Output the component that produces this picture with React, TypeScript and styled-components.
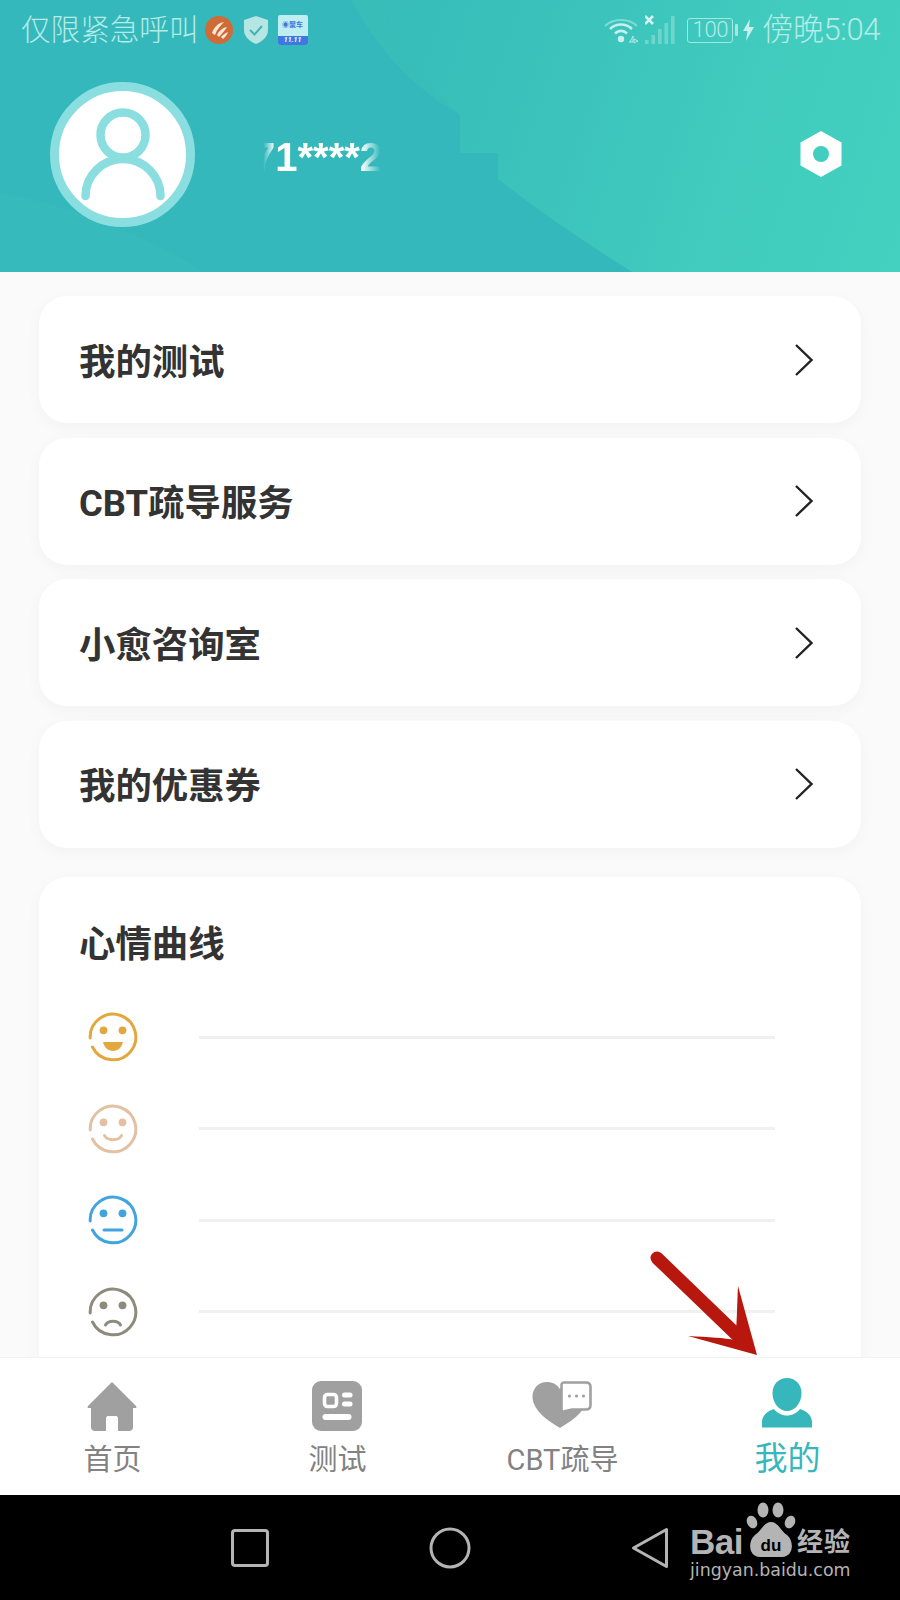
import * as React from 'react';
import styled, { createGlobalStyle } from 'styled-components';

const GlobalStyle = createGlobalStyle`
  html, body {
    margin: 0;
    padding: 0;
    background: #fafafa;
  }
  * {
    box-sizing: border-box;
  }
`;

const Page = styled.div`
  position: relative;
  display: flex;
  flex-direction: column;
  width: 900px;
  height: 1600px;
  overflow: hidden;
  background: #fafafa;
  font-family: Roboto, 'Noto Sans CJK SC', sans-serif;
`;

const Header = styled.header`
  position: relative;
  flex: 0 0 272px;
  background: linear-gradient(108deg, #37bcba 35%, #3ac1bb 55%, #40cbbe 78%, #44d1bf 100%);
`;

const HeaderArt = styled.svg`
  position: absolute;
  inset: 0;
`;

const StatusBar = styled.div`
  position: relative;
  display: flex;
  justify-content: space-between;
  align-items: center;
  height: 60px;
  padding: 0 20px 0 21px;
  color: #b5ebe6;
`;

const StatusGroup = styled.div`
  display: flex;
  align-items: center;
`;

const StatusText = styled.span`
  font-size: 29.6px;
  line-height: 36px;
  font-weight: 300;
  white-space: nowrap;
`;

const ClockText = styled(StatusText)`
  margin-left: 8px;
  font-size: 31px;
  letter-spacing: -0.4px;
`;

const StatusIcon = styled.svg<{ $gap?: number }>`
  display: block;
  flex: none;
  margin-left: ${p => p.$gap ?? 8}px;
`;

const AppBadge = styled.div`
  display: flex;
  flex-direction: column;
  width: 30px;
  height: 30px;
  margin-left: 10px;
  overflow: hidden;
  border-radius: 2px;
  background: #bfeef0;
`;

const AppBadgeTop = styled.span`
  flex: 1;
  font-size: 7px;
  line-height: 20px;
  font-weight: 700;
  text-align: center;
  color: #3f78d8;
`;

const AppBadgeBand = styled.span`
  height: 9px;
  font-size: 7px;
  line-height: 9px;
  font-weight: 700;
  font-style: italic;
  text-align: center;
  color: #ffffff;
  background: #3f78e0;
`;

const BatteryBox = styled.div`
  width: 46px;
  height: 25px;
  margin-left: 12px;
  border: 1.5px solid #a5e6e0;
  border-radius: 3px;
  font-size: 22px;
  line-height: 22px;
  font-weight: 300;
  text-align: center;
  letter-spacing: -0.4px;
`;

const BatteryTip = styled.div`
  width: 3px;
  height: 12px;
  margin-left: 2px;
  border-radius: 1px;
  background: #a5e6e0;
`;

const Profile = styled.div`
  position: relative;
  display: flex;
  align-items: center;
  height: 186px;
  padding: 0 58px 0 50px;
  margin-top: 1px;
`;

const Avatar = styled.div`
  display: flex;
  align-items: center;
  justify-content: center;
  width: 145px;
  height: 145px;
  border: 9px solid #8bdee0;
  border-radius: 50%;
  background: #ffffff;
`;

const UserName = styled.div`
  flex: 1;
  margin-left: 58px;
  padding-top: 5px;
  font-family: 'Liberation Sans', sans-serif;
  font-size: 40px;
  font-weight: 700;
  line-height: 44px;
  color: #ffffff;
`;

const UserNameMask = styled.span`
  display: inline-block;
  -webkit-mask-image: linear-gradient(90deg, transparent 8%, #000 17%, #000 84%, transparent 99%);
  mask-image: linear-gradient(90deg, transparent 8%, #000 17%, #000 84%, transparent 99%);
`;

const Content = styled.main`
  flex: 1;
  min-height: 0;
  overflow: hidden;
  padding: 24px 39px 0;
`;

const Card = styled.div`
  border-radius: 28px;
  background: #ffffff;
  box-shadow: 0 4px 16px rgba(0, 0, 0, 0.035);
`;

const MenuCard = styled(Card)`
  display: flex;
  align-items: center;
  justify-content: space-between;
  height: 127px;
  margin-bottom: 14.5px;
  padding: 0 47px 0 40px;
`;

const MenuTitle = styled.span`
  padding-top: 6px;
  font-size: 36.4px;
  font-weight: 700;
  line-height: 44px;
  color: #333333;
`;

const MoodCard = styled(Card)`
  margin-top: 29px;
  padding: 46px 0 40px;
`;

const MoodTitle = styled.h2`
  margin: 0 0 25px 40px;
  font-size: 36.4px;
  font-weight: 700;
  line-height: 44px;
  color: #333333;
`;

const MoodRow = styled.div`
  display: flex;
  align-items: center;
  gap: 61px;
  height: 91.5px;
  padding: 0 86px 0 49px;
`;

const MoodLine = styled.div`
  flex: 1;
  height: 3px;
  background: #f0f0f0;
`;

const TabBar = styled.nav`
  display: grid;
  flex: 0 0 138px;
  grid-template-columns: repeat(4, 1fr);
  border-top: 1px solid #f2f2f2;
  background: #ffffff;
`;

const TabItem = styled.div<{ $active?: boolean }>`
  display: flex;
  flex-direction: column;
  align-items: center;
  padding-top: ${p => (p.$active ? 20 : 23)}px;
  color: ${p => (p.$active ? '#37b7bb' : '#828282')};
`;

const TabIcon = styled.svg`
  display: block;
  flex: none;
  margin-right: 1px;
`;

const TabLabel = styled.span<{ $active?: boolean }>`
  margin-top: ${p => (p.$active ? 11 : 9)}px;
  font-size: ${p => (p.$active ? 33 : 29)}px;
  line-height: 40px;
  white-space: nowrap;
`;

const SoftBar = styled.div`
  position: relative;
  display: flex;
  flex: 0 0 105px;
  align-items: center;
  justify-content: center;
  gap: 160px;
  background: #000000;
`;

const SoftKey = styled.svg`
  display: block;
`;

const Watermark = styled.div`
  position: absolute;
  top: 0;
  left: 690px;
  width: 175px;
  color: #b4b4b4;
`;

const WatermarkTop = styled.div`
  display: flex;
  align-items: flex-end;
  height: 70px;
`;

const WatermarkBai = styled.span`
  font-family: 'Liberation Sans', sans-serif;
  font-size: 35px;
  font-weight: 700;
  line-height: 46px;
  letter-spacing: -0.5px;
`;

const WatermarkJing = styled.span`
  margin-left: 1px;
  font-size: 26px;
  font-weight: 700;
  line-height: 46px;
  letter-spacing: 1px;
`;

const WatermarkUrl = styled.div`
  margin-top: -7px;
  font-family: 'DejaVu Sans', sans-serif;
  font-size: 17.4px;
  line-height: 24px;
  white-space: nowrap;
`;

const ArrowOverlay = styled.svg`
  position: absolute;
  top: 1250px;
  left: 650px;
`;

const Face: React.FC<{ color: string; mouth: React.ReactNode }> = ({ color, mouth }) => (
  <svg width={50} height={50} viewBox="0 0 50 50" fill="none" style={{ flex: 'none' }}>
    <path d="M4.5 35 A22.8 22.8 0 1 0 2.2 26" stroke={color} strokeWidth={3} strokeLinecap="round" />
    <circle cx={15.5} cy={18.3} r={3.9} fill={color} />
    <circle cx={34.5} cy={18.3} r={3.9} fill={color} />
    {mouth}
  </svg>
);

const moods = [
  {
    color: '#e2a73e',
    mouth: <path d="M15 30 H35 C34 35 30 39 25 39 C20 39 16 35 15 30 Z" fill="#e2a73e" />,
  },
  {
    color: '#e3c0a2',
    mouth: <path d="M16.5 31.5 C19 37 31 37 33.5 31.5" stroke="#e3c0a2" strokeWidth={3} strokeLinecap="round" />,
  },
  {
    color: '#41a3e0',
    mouth: <path d="M16 35 H34" stroke="#41a3e0" strokeWidth={3} strokeLinecap="round" />,
  },
  {
    color: '#8f8b7c',
    mouth: <path d="M17.5 38 C20 33 30 33 32.5 38" stroke="#8f8b7c" strokeWidth={3} strokeLinecap="round" />,
  },
];

const menuItems = ['我的测试', 'CBT疏导服务', '小愈咨询室', '我的优惠券'];

const Chevron = () => (
  <svg width={20} height={34} viewBox="0 0 20 34" fill="none">
    <path d="M2 2 L17.5 17 L2 32" stroke="#222222" strokeWidth={2.4} />
  </svg>
);

const App: React.FC = () => {
  return (
    <Page>
      <GlobalStyle />
      <Header>
        <HeaderArt width={900} height={272} viewBox="0 0 900 272">
          <path
            d="M0 0 H378 C400 48 428 88 460 115 V153 H498 V179 C545 216 590 246 632 272 H0 Z"
            fill="#38bdb9"
          />
          <path
            d="M0 0 H352 C372 40 404 82 460 115 V153 H498 V179 C545 216 590 246 632 272 H0 Z"
            fill="#35b8bb"
          />
          <path d="M0 193 C70 205 140 232 205 272 H0 Z" fill="#36babb" />
        </HeaderArt>
        <StatusBar>
          <StatusGroup>
            <StatusText>仅限紧急呼叫</StatusText>
            <StatusIcon $gap={6} width={28} height={28} viewBox="0 0 28 28">
              <circle cx={14} cy={14} r={14} fill="#cf6b35" />
              <path d="M7 17 C9 11 13 7 19 6 C16 9 12 13 10 19 Z" fill="#f8e6d8" />
              <path d="M12 19 C14 15 17 12 22 11 C20 14 17 18 14 21 Z" fill="#f8e6d8" />
              <path d="M16 21 C18 19 20 17 23 16 C22 19 20 21 18 23 Z" fill="#f8e6d8" />
            </StatusIcon>
            <StatusIcon $gap={11} width={24} height={28} viewBox="0 0 24 28">
              <path d="M12 0 L24 4 V14 C24 21 18 25.5 12 28 C6 25.5 0 21 0 14 V4 Z" fill="#b5e6e4" />
              <path d="M6 14 L10.5 18.5 L18 10" fill="none" stroke="#48b3b3" strokeWidth={2} />
            </StatusIcon>
            <AppBadge>
              <AppBadgeTop>◉聚车</AppBadgeTop>
              <AppBadgeBand>11.11</AppBadgeBand>
            </AppBadge>
          </StatusGroup>
          <StatusGroup>
            <StatusIcon $gap={0} width={36} height={30} viewBox="0 0 36 30" fill="none">
              <path d="M1 11 C9 3 25 3 33 11" stroke="#7fdcd3" strokeWidth={2} />
              <path d="M6 14 C12 8 22 8 28 14" stroke="#c9f0ec" strokeWidth={2.6} />
              <path d="M11 18.5 C14.5 15 19.5 15 23 18.5" stroke="#c9f0ec" strokeWidth={2.6} />
              <circle cx={17} cy={24} r={3.2} fill="#c9f0ec" />
              <path d="M26 27 L29 21 V27 H25 M30 24 L34 26 L30 28 Z" stroke="#b5ebe6" strokeWidth={1} />
            </StatusIcon>
            <StatusIcon $gap={5} width={30} height={30} viewBox="0 0 30 30" fill="none">
              <path d="M0 1 L8 9 M8 1 L0 9" stroke="#d5f4f0" strokeWidth={2.6} />
              <rect x={0} y={25} width={3.6} height={4} fill="#6fd6cd" />
              <rect x={6.5} y={20} width={3.6} height={9} fill="#6fd6cd" />
              <rect x={13} y={14} width={3.6} height={15} fill="#6fd6cd" />
              <rect x={19.5} y={8} width={3.6} height={21} fill="#6fd6cd" />
              <rect x={26} y={1} width={3.6} height={28} fill="#6fd6cd" />
            </StatusIcon>
            <BatteryBox>100</BatteryBox>
            <BatteryTip />
            <StatusIcon $gap={5} width={11} height={22} viewBox="0 0 11 22">
              <path d="M7 0 L0 12 H4.5 L3 22 L11 8 H6 Z" fill="#c9f0ec" />
            </StatusIcon>
            <ClockText>傍晚5:04</ClockText>
          </StatusGroup>
        </StatusBar>
        <Profile>
          <Avatar>
            <svg width={84} height={93} viewBox="0 0 84 93" fill="none">
              <circle cx={42} cy={27} r={22.5} stroke="#8bdee0" strokeWidth={8.5} />
              <path d="M4.5 88 C4.5 68 21 51 42 51 C63 51 79.5 68 79.5 88" stroke="#8bdee0" strokeWidth={8.5} strokeLinecap="round" />
            </svg>
          </Avatar>
          <UserName>
            <UserNameMask>71****2</UserNameMask>
          </UserName>
          <svg width={42} height={46} viewBox="0 0 42 46">
            <path
              fillRule="evenodd"
              d="M21 0 L41.5 11.5 V34.5 L21 46 L0.5 34.5 V11.5 Z M21 15 A8 8 0 1 0 21 31 A8 8 0 1 0 21 15 Z"
              fill="#ffffff"
            />
          </svg>
        </Profile>
      </Header>

      <Content>
        {menuItems.map(item => (
          <MenuCard key={item}>
            <MenuTitle>{item}</MenuTitle>
            <Chevron />
          </MenuCard>
        ))}
        <MoodCard>
          <MoodTitle>心情曲线</MoodTitle>
          {moods.map(mood => (
            <MoodRow key={mood.color}>
              <Face color={mood.color} mouth={mood.mouth} />
              <MoodLine />
            </MoodRow>
          ))}
        </MoodCard>
      </Content>

      <TabBar>
        <TabItem>
          <TabIcon width={50} height={50} viewBox="0 0 50 50">
            <path
              fillRule="evenodd"
              d="M25 1 L49 25 C50 26.5 49.5 27 48 27 H46 V46 C46 48.5 44.5 50 42 50 H8 C5.5 50 4 48.5 4 46 V27 H2 C0.5 27 0 26.5 1 25 Z M19 50 H31 V37 C31 36 30 35 29 35 H21 C20 35 19 36 19 37 Z"
              fill="#a0a0a0"
            />
          </TabIcon>
          <TabLabel>首页</TabLabel>
        </TabItem>
        <TabItem>
          <TabIcon width={50} height={50} viewBox="0 0 50 50">
            <rect width={50} height={50} rx={9} fill="#a0a0a0" />
            <rect x={12.5} y={13.5} width={12} height={12} rx={3} fill="none" stroke="#ffffff" strokeWidth={3.6} />
            <rect x={30} y={11.5} width={10.5} height={5} rx={2.5} fill="#ffffff" />
            <rect x={30} y={20.5} width={10.5} height={5} rx={2.5} fill="#ffffff" />
            <rect x={10.5} y={33} width={29} height={6} rx={3} fill="#ffffff" />
          </TabIcon>
          <TabLabel>测试</TabLabel>
        </TabItem>
        <TabItem>
          <TabIcon width={60} height={50} viewBox="0 0 60 50">
            <path d="M28 47 C18 41 0.5 30 0.5 15.5 C0.5 7 7 1 15 1 C20.5 1 25 3.5 28 8 C31 3.5 35 1 41 1 C49 1 55.5 7 55.5 15.5 C55.5 30 38 41 28 47 Z" fill="#a0a0a0" />
            <path d="M32 1.5 H54 C57 1.5 58.5 3 58.5 6 V24 C58.5 27 57 28.5 54 28.5 H40 L29.5 31 V4 C29.5 2.5 30.5 1.5 32 1.5 Z" fill="#ffffff" stroke="#a0a0a0" strokeWidth={2.6} />
            <circle cx={37.5} cy={15} r={1.6} fill="#a0a0a0" />
            <circle cx={44.5} cy={15} r={1.6} fill="#a0a0a0" />
            <circle cx={51.5} cy={15} r={1.6} fill="#a0a0a0" />
          </TabIcon>
          <TabLabel>CBT疏导</TabLabel>
        </TabItem>
        <TabItem $active>
          <TabIcon width={50} height={50} viewBox="0 0 50 50">
            <path d="M25 0 C34 0 39.5 7 39.5 15 C39.5 25 33 33 25 33 C17 33 10.5 25 10.5 15 C10.5 7 16 0 25 0 Z" fill="#37b7bb" />
            <path d="M12 31 C15 35 20 37.5 25 37.5 C30 37.5 35 35 38 31 C45 33 50 38 50 44 V49.5 H0 V44 C0 38 5 33 12 31 Z" fill="#37b7bb" />
          </TabIcon>
          <TabLabel $active>我的</TabLabel>
        </TabItem>
      </TabBar>

      <SoftBar>
        <SoftKey width={38} height={38} viewBox="0 0 38 38" fill="none">
          <rect x={1.5} y={1.5} width={35} height={35} rx={2.5} stroke="#b4b4b4" strokeWidth={3} />
        </SoftKey>
        <SoftKey width={42} height={42} viewBox="0 0 42 42" fill="none">
          <circle cx={21} cy={21} r={19} stroke="#b4b4b4" strokeWidth={3} />
        </SoftKey>
        <SoftKey width={38} height={42} viewBox="0 0 38 42" fill="none">
          <path d="M35.5 2.5 V39.5 L2.5 21 Z" stroke="#b4b4b4" strokeWidth={3} strokeLinejoin="round" />
        </SoftKey>
        <Watermark>
          <WatermarkTop>
            <WatermarkBai>Bai</WatermarkBai>
            <svg width={50} height={60} viewBox="0 0 50 60" style={{ flex: 'none', margin: '0 0 3px 3px' }}>
              <ellipse cx={17} cy={8} rx={5.5} ry={7.5} fill="#b4b4b4" />
              <ellipse cx={32} cy={8} rx={5.5} ry={7.5} fill="#b4b4b4" />
              <ellipse cx={6} cy={20} rx={5} ry={6.5} fill="#b4b4b4" transform="rotate(-25 6 20)" />
              <ellipse cx={44} cy={20} rx={5} ry={6.5} fill="#b4b4b4" transform="rotate(25 44 20)" />
              <path d="M25 20 C32 20 34 28 41 33 C49 40 47 55 36 55 H14 C3 55 1 40 9 33 C16 28 18 20 25 20 Z" fill="#b4b4b4" />
              <text x={25} y={49} textAnchor="middle" fontSize={17} fontWeight={700} fontFamily="'Liberation Sans', sans-serif" fill="#000000">
                du
              </text>
            </svg>
            <WatermarkJing>经验</WatermarkJing>
          </WatermarkTop>
          <WatermarkUrl>jingyan.baidu.com</WatermarkUrl>
        </Watermark>
      </SoftBar>

      <ArrowOverlay width={120} height={115} viewBox="0 0 120 115">
        <path d="M7 8 L87 85" stroke="#b8170d" strokeWidth={13} strokeLinecap="round" fill="none" />
        <path d="M88 36 L107 105 L38 86 C60 87 74 88 85 90 C87 76 87 56 88 36 Z" fill="#b8170d" />
      </ArrowOverlay>
    </Page>
  );
};

export default App;
